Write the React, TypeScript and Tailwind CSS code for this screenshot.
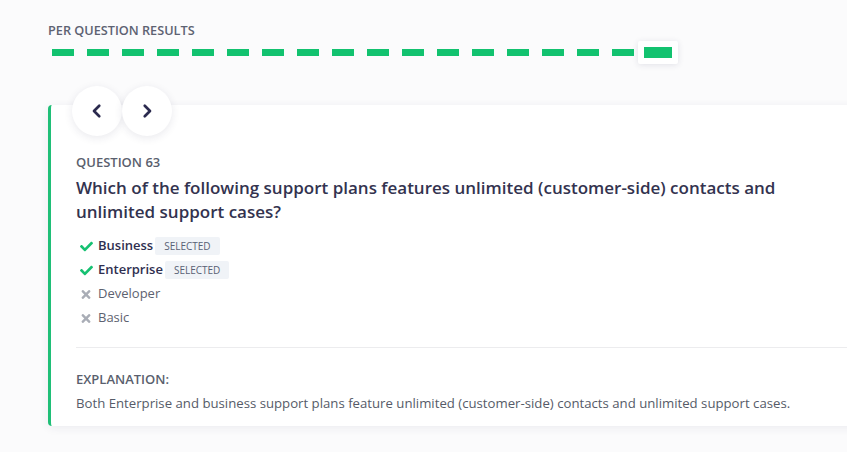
import React from 'react';

const TOTAL = 18;
const CURRENT = 18;

function Check() {
  return (
    <svg viewBox="0 0 512 512" className="w-[13px] h-[13px]" fill="#16c172">
      <path d="M173.9 439.4l-166.4-166.4c-10-10-10-26.2 0-36.2l36.2-36.2c10-10 26.2-10 36.2 0L192 312.7 432.1 72.6c10-10 26.2-10 36.2 0l36.2 36.2c10 10 10 26.2 0 36.2l-294.4 294.4c-10 10-26.2 10-36.2 0z" />
    </svg>
  );
}

function Cross() {
  return (
    <svg viewBox="0 0 352 512" className="w-[12px] h-[13px]" fill="#a9adb6">
      <path d="M242.7 256l100.1-100.1c12.3-12.3 12.3-32.2 0-44.5l-22.2-22.2c-12.3-12.3-32.2-12.3-44.5 0L176 189.3 75.9 89.2c-12.3-12.3-32.2-12.3-44.5 0L9.2 111.4c-12.3 12.3-12.3 32.2 0 44.5L109.3 256 9.2 356.1c-12.3 12.3-12.3 32.2 0 44.5l22.2 22.2c12.3 12.3 32.2 12.3 44.5 0L176 322.7l100.1 100.1c12.3 12.3 32.2 12.3 44.5 0l22.2-22.2c12.3-12.3 12.3-32.2 0-44.5L242.7 256z" />
    </svg>
  );
}

const options = [
  { label: 'Business', correct: true, selected: true },
  { label: 'Enterprise', correct: true, selected: true },
  { label: 'Developer', correct: false, selected: false },
  { label: 'Basic', correct: false, selected: false },
];

export default function App() {
  return (
    <div
      className="min-h-screen w-full overflow-hidden bg-[#fbfbfc] pl-[48px] pt-[22px]"
      style={{ fontFamily: '"Open Sans", "Noto Sans", sans-serif' }}
    >
      <div className="text-[12.7px] font-semibold text-[#5d6272] leading-[16px]">
        PER QUESTION RESULTS
      </div>

      <div className="mt-[3px] flex items-center pl-[4px] h-[22px]">
        {Array.from({ length: TOTAL }).map((_, i) =>
          i + 1 === CURRENT ? (
            <div key={i} className="ml-[-9px] rounded-[2px] bg-white p-[6px] shadow-[0_1px_6px_rgba(40,40,80,0.12)]">
              <div className="h-[11px] w-[28px] bg-[#12c26f]" />
            </div>
          ) : (
            <div key={i} className="mr-[13px] h-[7px] w-[22px] bg-[#12c26f]" />
          )
        )}
      </div>

      <div className="relative mt-[42px] w-[820px] rounded-l-[4px] border-l-[3px] border-[#1fbf77] bg-white pl-[25px] pr-0 pt-[49px] pb-[14px] shadow-[0_2px_10px_rgba(40,40,80,0.07)]">
        <div className="absolute left-[21px] top-[-19px] flex">
          <button className="flex h-[50px] w-[50px] items-center justify-center rounded-full bg-white shadow-[0_2px_8px_rgba(40,40,80,0.1)]">
            <svg viewBox="0 0 24 24" className="h-[18px] w-[18px]" fill="none" stroke="#2b2a4e" strokeWidth="3.6" strokeLinecap="round" strokeLinejoin="round">
              <path d="M15 5l-7 7 7 7" />
            </svg>
          </button>
          <button className="flex h-[50px] w-[50px] items-center justify-center rounded-full bg-white shadow-[0_2px_8px_rgba(40,40,80,0.1)]">
            <svg viewBox="0 0 24 24" className="h-[18px] w-[18px]" fill="none" stroke="#2b2a4e" strokeWidth="3.6" strokeLinecap="round" strokeLinejoin="round">
              <path d="M9 5l7 7-7 7" />
            </svg>
          </button>
        </div>

        <div className="text-[13px] font-semibold leading-[16px] text-[#5a5f6e]">QUESTION 63</div>
        <h2 className="mt-[6px] w-[720px] text-[17px] font-semibold leading-[24px] text-[#33334f]">
          Which of the following support plans features unlimited (customer-side) contacts and unlimited support cases?
        </h2>

        <ul className="mt-[10px]">
          {options.map((o) => (
            <li key={o.label} className="flex h-[24px] items-center">
              <span className="flex w-[22px] items-center pl-[4px]">{o.correct ? <Check /> : <Cross />}</span>
              <span className={o.selected ? 'text-[13px] font-semibold text-[#2f2f50]' : 'text-[13px] text-[#5d6270]'}>
                {o.label}
              </span>
              {o.selected && (
                <span className="ml-[2px] rounded-[2px] bg-[#f0f3f7] px-[9px] py-[2px] text-[10px] leading-[14px] text-[#596175]">
                  SELECTED
                </span>
              )}
            </li>
          ))}
        </ul>

        <div className="mt-[17px] border-t border-[#ececee]" />

        <div className="mt-[23px] text-[13px] font-semibold leading-[16px] text-[#5a5f6e]">EXPLANATION:</div>
        <p className="mt-[7px] text-[13.2px] leading-[18px] text-[#565b68]">
          Both Enterprise and business support plans feature unlimited (customer-side) contacts and unlimited support cases.
        </p>
      </div>
    </div>
  );
}
